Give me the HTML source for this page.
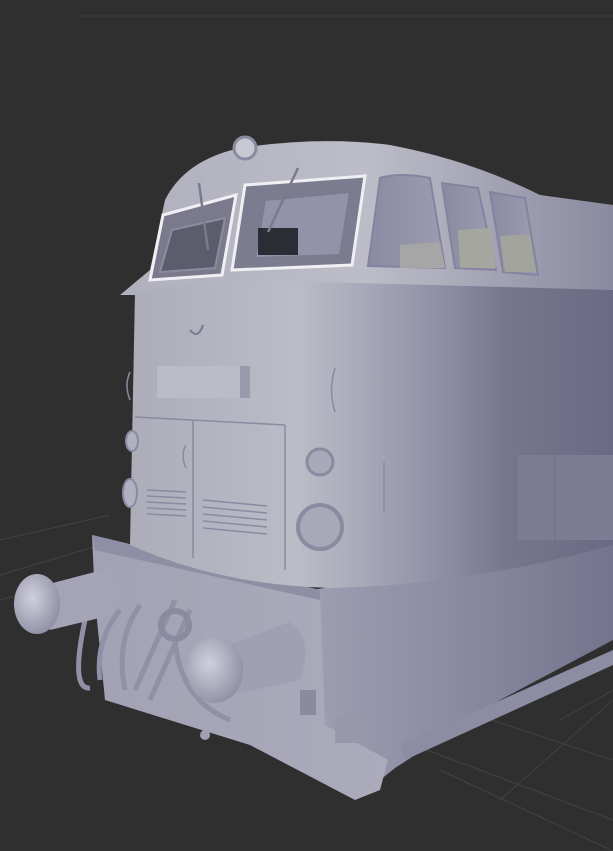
<!DOCTYPE html>
<html><head><style>
html,body{margin:0;padding:0;background:#2e2e2e;}
svg{display:block}
</style></head><body>
<svg width="613" height="851" viewBox="0 0 613 851" xmlns="http://www.w3.org/2000/svg">
<defs>
<linearGradient id="front" x1="0" x2="1" y1="0" y2="0">
<stop offset="0" stop-color="#adadba"/>
<stop offset="0.35" stop-color="#bcbcc7"/>
<stop offset="0.6" stop-color="#9696ab"/>
<stop offset="0.78" stop-color="#76768e"/>
<stop offset="1" stop-color="#6a6a84"/>
</linearGradient>
<linearGradient id="roof" x1="0" x2="1">
<stop offset="0" stop-color="#b0b0be"/>
<stop offset="0.5" stop-color="#bdbdc8"/>
<stop offset="1" stop-color="#8a8aa0"/>
</linearGradient>
<linearGradient id="lower" x1="0" x2="1">
<stop offset="0" stop-color="#a2a2b4"/>
<stop offset="1" stop-color="#ababbc"/>
</linearGradient>
<linearGradient id="lside" x1="0" x2="1">
<stop offset="0" stop-color="#a0a0b4"/>
<stop offset="1" stop-color="#74748e"/>
</linearGradient>
<radialGradient id="buf" cx="0.4" cy="0.4" r="0.7">
<stop offset="0" stop-color="#d0d0dc"/>
<stop offset="1" stop-color="#8a8aa0"/>
</radialGradient>
<linearGradient id="glass" x1="0" x2="1">
<stop offset="0" stop-color="#8a8aa2"/>
<stop offset="1" stop-color="#9c9cb2"/>
</linearGradient>
</defs>
<rect width="613" height="851" fill="#2f2f30"/>
<g stroke="#434345" stroke-width="1" fill="none">
<line x1="80" y1="16" x2="613" y2="16" stroke="#3e3e40"/>
<line x1="0" y1="540" x2="110" y2="515"/>
<line x1="0" y1="575" x2="100" y2="545"/>
<line x1="0" y1="600" x2="60" y2="585"/>
<line x1="400" y1="740" x2="613" y2="820"/>
<line x1="430" y1="700" x2="613" y2="760"/>
<line x1="500" y1="800" x2="613" y2="700"/>
<line x1="560" y1="720" x2="613" y2="690"/>
<line x1="440" y1="770" x2="613" y2="851"/>
</g>
<path d="M300,592 L613,540 L613,640 L500,700 L395,768 L355,800 L320,730 Z" fill="url(#lside)"/>
<path d="M400,745 L613,650 L613,665 L405,760 Z" fill="#8c8ca2"/>
<path d="M92,535 L320,590 L325,725 L388,760 L380,790 L355,800 L250,745 L105,700 L95,600 Z" fill="url(#lower)"/>
<path d="M92,535 L320,590 L320,600 L95,550 Z" fill="#8e8ea4"/>
<path d="M165,200 Q185,160 240,148 Q320,136 390,145 Q470,160 540,195 L613,205 L613,295 L120,295 L150,270 Z" fill="url(#roof)"/>
<path d="M135,292 Q200,280 320,282 L613,290 L613,545 Q470,585 330,588 Q220,585 130,545 Z" fill="url(#front)"/>
<rect x="518" y="455" width="95" height="85" fill="#7c7c94"/>
<line x1="555" y1="455" x2="555" y2="540" stroke="#6e6e86"/>
<path d="M163,215 L236,195 L222,275 L150,280 Z" fill="#7a7a8c" stroke="#f0f0f4" stroke-width="3"/>
<path d="M172,230 L225,218 L215,268 L160,272 Z" fill="#5c5c6c" stroke="#8c8ca0" stroke-width="2"/>
<path d="M245,185 L365,176 L352,265 L232,270 Z" fill="#7c7c90" stroke="#f0f0f4" stroke-width="3"/>
<path d="M265,200 L350,192 L340,255 L255,258 Z" fill="#9292a8" stroke="#7a7a90" stroke-width="2"/>
<rect x="258" y="228" width="40" height="27" fill="#2c2c34"/>
<path d="M380,178 Q400,172 430,178 L445,268 L368,266 Z" fill="url(#glass)" stroke="#8484a0" stroke-width="2"/>
<path d="M400,245 L440,242 L445,268 L400,268 Z" fill="#a6a6a6"/>
<path d="M442,183 L478,188 L496,270 L455,268 Z" fill="url(#glass)" stroke="#8484a0" stroke-width="2"/>
<path d="M458,230 L490,228 L496,268 L460,268 Z" fill="#a6a6a0"/>
<path d="M490,192 L525,198 L538,275 L503,272 Z" fill="url(#glass)" stroke="#8484a0" stroke-width="2"/>
<path d="M500,236 L530,234 L536,272 L505,272 Z" fill="#a4a49e"/>
<g stroke="#7a7a8a" stroke-width="2.5" fill="none">
<line x1="199" y1="183" x2="208" y2="250"/>
<line x1="298" y1="168" x2="268" y2="232"/>
</g>
<circle cx="245" cy="148" r="11" fill="#c8c8d2" stroke="#8a8aa0" stroke-width="3"/>
<rect x="157" y="366" width="93" height="32" fill="#bcbcc6"/>
<rect x="240" y="366" width="10" height="32" fill="#9a9aae"/>
<g stroke="#8a8aa0" stroke-width="1.5" fill="none">
<line x1="135" y1="417" x2="285" y2="425"/>
<line x1="193" y1="420" x2="193" y2="558"/>
<line x1="285" y1="425" x2="285" y2="570"/>
<path d="M130,372 Q124,385 130,400"/>
<path d="M335,368 Q328,390 335,412"/>
<path d="M186,445 Q180,455 186,468"/>
<line x1="384" y1="462" x2="384" y2="512"/>
</g>
<g stroke="#8a8aa0" stroke-width="1.5">
<line x1="147" y1="490" x2="186" y2="492"/><line x1="147" y1="496" x2="186" y2="498"/>
<line x1="147" y1="502" x2="186" y2="504"/><line x1="147" y1="508" x2="186" y2="510"/>
<line x1="147" y1="514" x2="186" y2="516"/>
<line x1="203" y1="500" x2="267" y2="506"/><line x1="203" y1="507" x2="267" y2="513"/>
<line x1="203" y1="514" x2="267" y2="520"/><line x1="203" y1="521" x2="267" y2="527"/>
<line x1="203" y1="528" x2="267" y2="534"/>
</g>
<circle cx="320" cy="462" r="13" fill="#a8a8b8" stroke="#8a8aa0" stroke-width="3"/>
<circle cx="320" cy="527" r="22" fill="#a8a8b8" stroke="#8a8aa0" stroke-width="4"/>
<ellipse cx="130" cy="493" rx="7" ry="14" fill="#b0b0c0" stroke="#8a8aa0" stroke-width="2"/>
<ellipse cx="132" cy="441" rx="6" ry="10" fill="#b0b0c0" stroke="#8a8aa0" stroke-width="2"/>
<path d="M190,330 Q198,340 203,325" stroke="#7a7a90" stroke-width="2" fill="none"/>
<g stroke="#9090a6" stroke-width="5" fill="none">
<path d="M85,620 Q70,690 90,688"/>
<path d="M120,610 Q95,640 100,680"/>
<path d="M140,605 Q115,640 125,690"/>
<path d="M175,600 L135,690"/>
<path d="M190,610 L150,700"/>
<path d="M175,640 Q180,700 230,720"/>
</g>
<circle cx="175" cy="625" r="14" fill="none" stroke="#8a8aa0" stroke-width="6"/>
<circle cx="205" cy="735" r="5" fill="#a0a0b4"/>
<rect x="300" y="690" width="16" height="25" fill="#8a8aa0"/>
<rect x="335" y="718" width="30" height="25" fill="#9898ac"/>
<path d="M45,585 L110,568 Q125,585 112,615 L50,630 Z" fill="#a4a4b6"/>
<ellipse cx="37" cy="604" rx="23" ry="30" fill="url(#buf)"/>
<path d="M215,650 L290,622 Q315,640 300,680 L230,695 Z" fill="#a0a0b4"/>
<ellipse cx="215" cy="670" rx="28" ry="33" fill="url(#buf)"/>
</svg>
</body></html>
